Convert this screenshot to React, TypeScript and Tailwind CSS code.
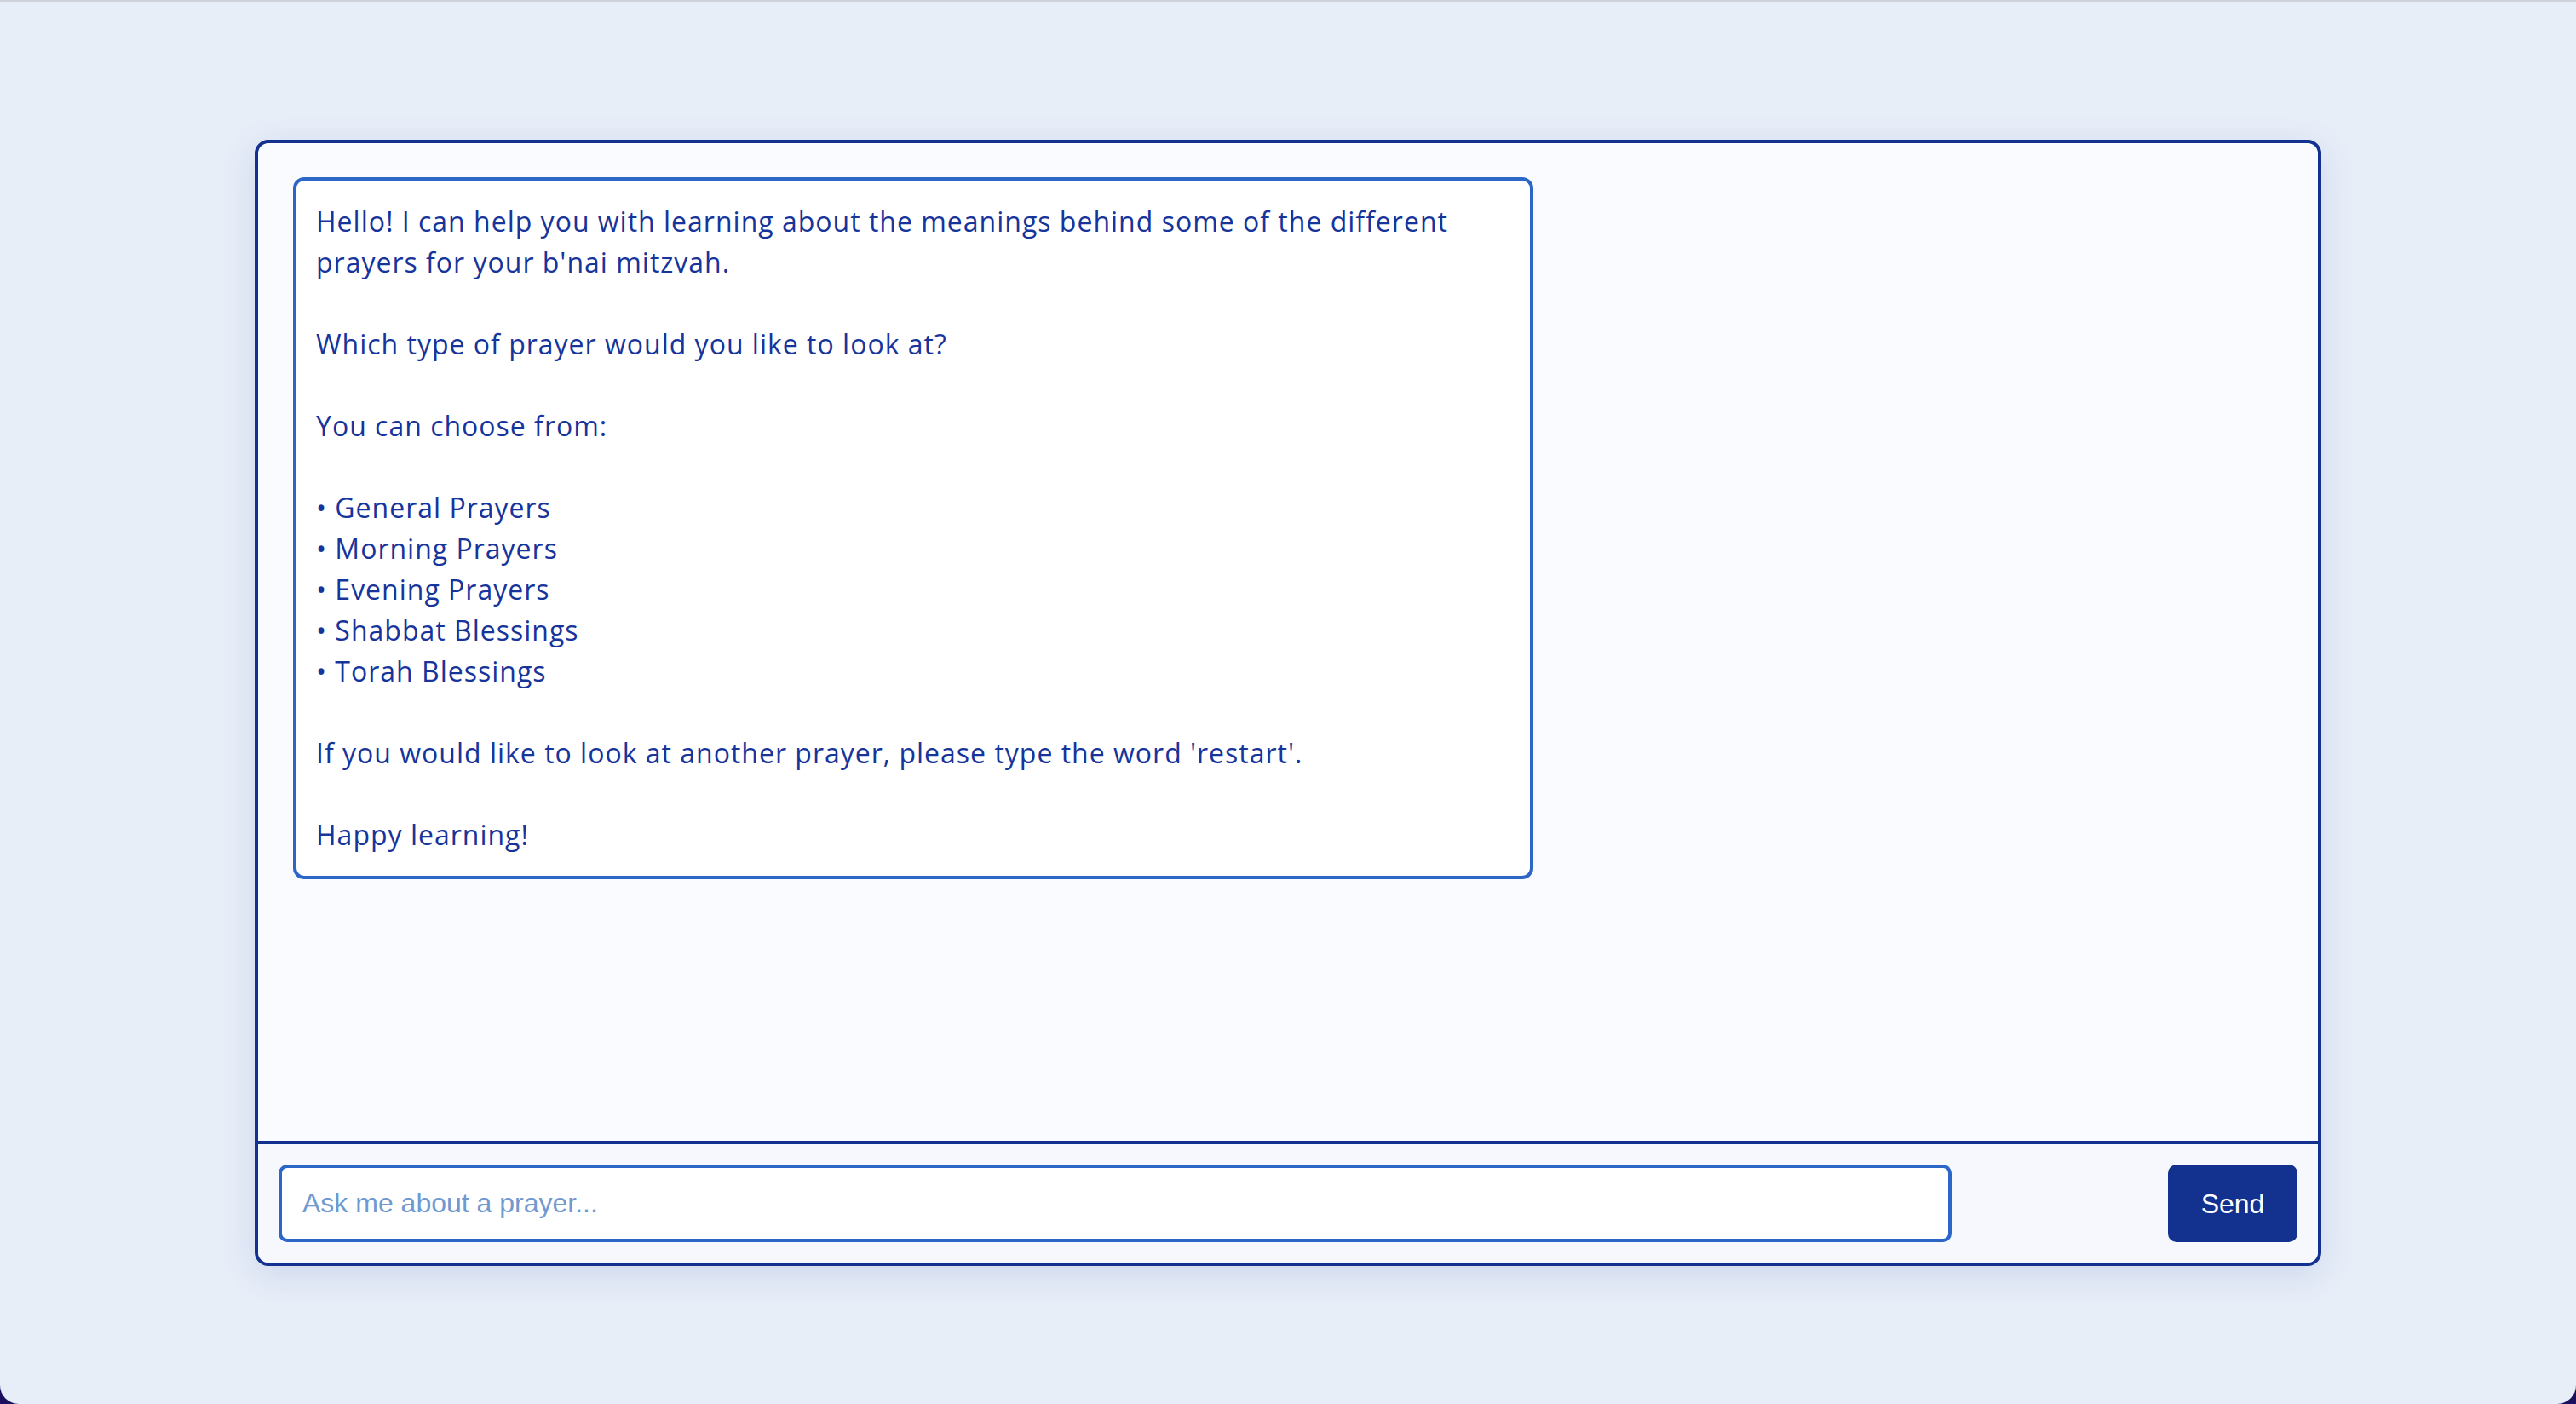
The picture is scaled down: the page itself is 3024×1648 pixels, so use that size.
import { useState } from "react";

const lines: string[] = [
  "Hello! I can help you with learning about the meanings behind some of the different",
  "prayers for your b'nai mitzvah.",
  "",
  "Which type of prayer would you like to look at?",
  "",
  "You can choose from:",
  "",
  "• General Prayers",
  "• Morning Prayers",
  "• Evening Prayers",
  "• Shabbat Blessings",
  "• Torah Blessings",
  "",
  "If you would like to look at another prayer, please type the word 'restart'.",
  "",
  "Happy learning!",
];

export default function App() {
  const [text, setText] = useState("");

  return (
    <div className="h-[1648px] w-full bg-[#1c0f5e]">
      <div className="flex h-full w-full items-center justify-center rounded-b-[22px] border-t-2 border-[#cfd3d9] bg-[#e8eef8]">
        <div className="flex h-[1322px] w-[2426px] flex-col overflow-hidden rounded-[16px] border-4 border-[#13318f] bg-[#f9fbff] shadow-[0_10px_40px_rgba(37,72,170,0.14)]">
          <div className="flex-1 px-[41px] pt-[40px]">
            <div className="w-[1456px] rounded-[13px] border-4 border-[#2c66c7] bg-white px-[23px] py-6 font-['Open_Sans',sans-serif] text-[32px] leading-[48px] tracking-[1px] text-[#16349a]">
              {lines.map((line, i) => (
                <div key={i} className="h-[48px] whitespace-nowrap">
                  {line}
                </div>
              ))}
            </div>
          </div>
          <div className="flex items-center justify-between border-t-4 border-[#13318f] bg-[#f6f8fd] p-6">
            <input
              value={text}
              onChange={(e) => setText(e.target.value)}
              placeholder="Ask me about a prayer..."
              className="h-[91px] w-[1964px] rounded-[10px] border-4 border-[#2c66c7] bg-white px-6 font-['Liberation_Sans',Arial,sans-serif] text-[32px] text-[#16349a] outline-none placeholder:text-[#7099cf]"
            />
            <button className="h-[91px] w-[152px] rounded-[10px] bg-[#13318f] font-['Liberation_Sans',Arial,sans-serif] text-[32px] text-white">
              Send
            </button>
          </div>
        </div>
      </div>
    </div>
  );
}
